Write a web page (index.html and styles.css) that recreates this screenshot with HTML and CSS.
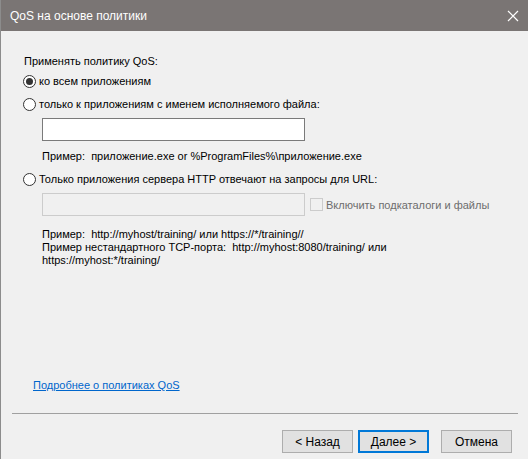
FILE: index.html
```html
<!DOCTYPE html>
<html lang="ru">
<head>
    <meta charset="UTF-8">
    <title>QoS на основе политики</title>
    <link rel="stylesheet" href="styles.css">
</head>
<body>
    <div class="window">
        <div class="titlebar">
            <span class="title">QoS на основе политики</span>
            <svg class="close" width="12" height="12" viewBox="0 0 12 12">
                <path d="M1 1 L11 11 M11 1 L1 11" stroke="#fff" stroke-width="1.2"/>
            </svg>
        </div>

        <div class="content">
            <p class="heading">Применять политику QoS:</p>

            <label class="radio-row">
                <span class="radio checked"></span>ко всем приложениям
            </label>
            <label class="radio-row">
                <span class="radio"></span>только к приложениям с именем исполняемого файла:
            </label>
            <div class="indent">
                <div class="textbox"></div>
                <p class="hint">Пример:&nbsp; приложение.exe or %ProgramFiles%\приложение.exe</p>
            </div>

            <label class="radio-row">
                <span class="radio"></span>Только приложения сервера HTTP отвечают на запросы для URL:
            </label>
            <div class="indent">
                <div class="url-row">
                    <div class="textbox disabled"></div>
                    <label class="check-row">
                        <span class="checkbox"></span>Включить подкаталоги и файлы
                    </label>
                </div>
                <div class="hint-lines">
                    <div>Пример:&nbsp; http://myhost/training/ или https://*/training//</div>
                    <div>Пример нестандартного TCP-порта:&nbsp; http://myhost:8080/training/ или</div>
                    <div>https://myhost:*/training/</div>
                </div>
            </div>

            <a class="more-link">Подробнее о политиках QoS</a>
        </div>

        <div class="separator"></div>

        <div class="buttons">
            <button class="btn">&lt; Назад</button>
            <button class="btn default">Далее &gt;</button>
            <button class="btn cancel">Отмена</button>
        </div>
    </div>
</body>
</html>
```

FILE: styles.css
```css
body {
    margin: 0;
    padding: 0;
    font-family: "Liberation Sans", Arial, sans-serif;
    font-size: 11px;
    color: #000;
}
.window {
    width: 528px;
    height: 459px;
    background-color: #f0f0f0;
    border-left: 1px solid #8c8c8c;
    box-sizing: border-box;
    display: flex;
    flex-direction: column;
}
.titlebar {
    height: 31px;
    background-color: #7a7574;
    color: #fff;
    display: flex;
    align-items: center;
    justify-content: space-between;
    padding: 0 9px 0 9px;
    flex-shrink: 0;
}
.title {
    font-size: 12px;
}
.content {
    padding: 22px 0 0 22px;
    flex: 1;
    display: flex;
    flex-direction: column;
}
.heading {
    margin: 0;
    height: 16px;
    line-height: 16px;
    padding-left: 1px;
}
.radio-row {
    display: flex;
    align-items: center;
    height: 16px;
    line-height: 16px;
    margin-top: 4px;
}
.radio-row + .radio-row {
    margin-top: 7px;
}
.radio {
    width: 11px;
    height: 11px;
    border: 1px solid #333;
    border-radius: 50%;
    background: #fff;
    margin-right: 3px;
    position: relative;
    flex-shrink: 0;
}
.radio.checked::after {
    content: "";
    position: absolute;
    left: 2px;
    top: 2px;
    width: 7px;
    height: 7px;
    border-radius: 50%;
    background: #333;
}
.indent {
    padding-left: 19px;
}
.textbox {
    width: 261px;
    height: 21px;
    border: 1px solid #7a7a7a;
    background: #fff;
    margin-top: 6px;
}
.textbox.disabled {
    border-color: #cccccc;
    background: #f0f0f0;
}
.hint {
    margin: 9px 0 4px 0;
    line-height: 13px;
}
.hint-lines {
    margin-top: 12px;
    line-height: 13px;
}
.url-row {
    display: flex;
    align-items: center;
}
.url-row .textbox {
    margin-top: 6px;
}
.check-row {
    display: flex;
    align-items: center;
    color: #6d6d6d;
    margin: 6px 0 0 5px;
}
.checkbox {
    width: 11px;
    height: 11px;
    border: 1px solid #cccccc;
    background: #f0f0f0;
    margin-right: 3px;
}
.more-link {
    margin-top: auto;
    margin-bottom: 22px;
    margin-left: 10px;
    color: #0066cc;
    text-decoration: underline;
    cursor: pointer;
    align-self: flex-start;
}
.separator {
    height: 1px;
    background: #a0a0a0;
    margin: 0 10px 0 11px;
}
.buttons {
    display: flex;
    justify-content: flex-end;
    padding: 16px 16px 6px 0;
    gap: 5px;
}
.btn {
    width: 71px;
    height: 23px;
    font-family: inherit;
    font-size: 12px;
    background: #e1e1e1;
    border: 1px solid #adadad;
    padding: 0;
}
.btn.default {
    border: 2px solid #0078d7;
}
.btn.cancel {
    margin-left: 7px;
}
```
